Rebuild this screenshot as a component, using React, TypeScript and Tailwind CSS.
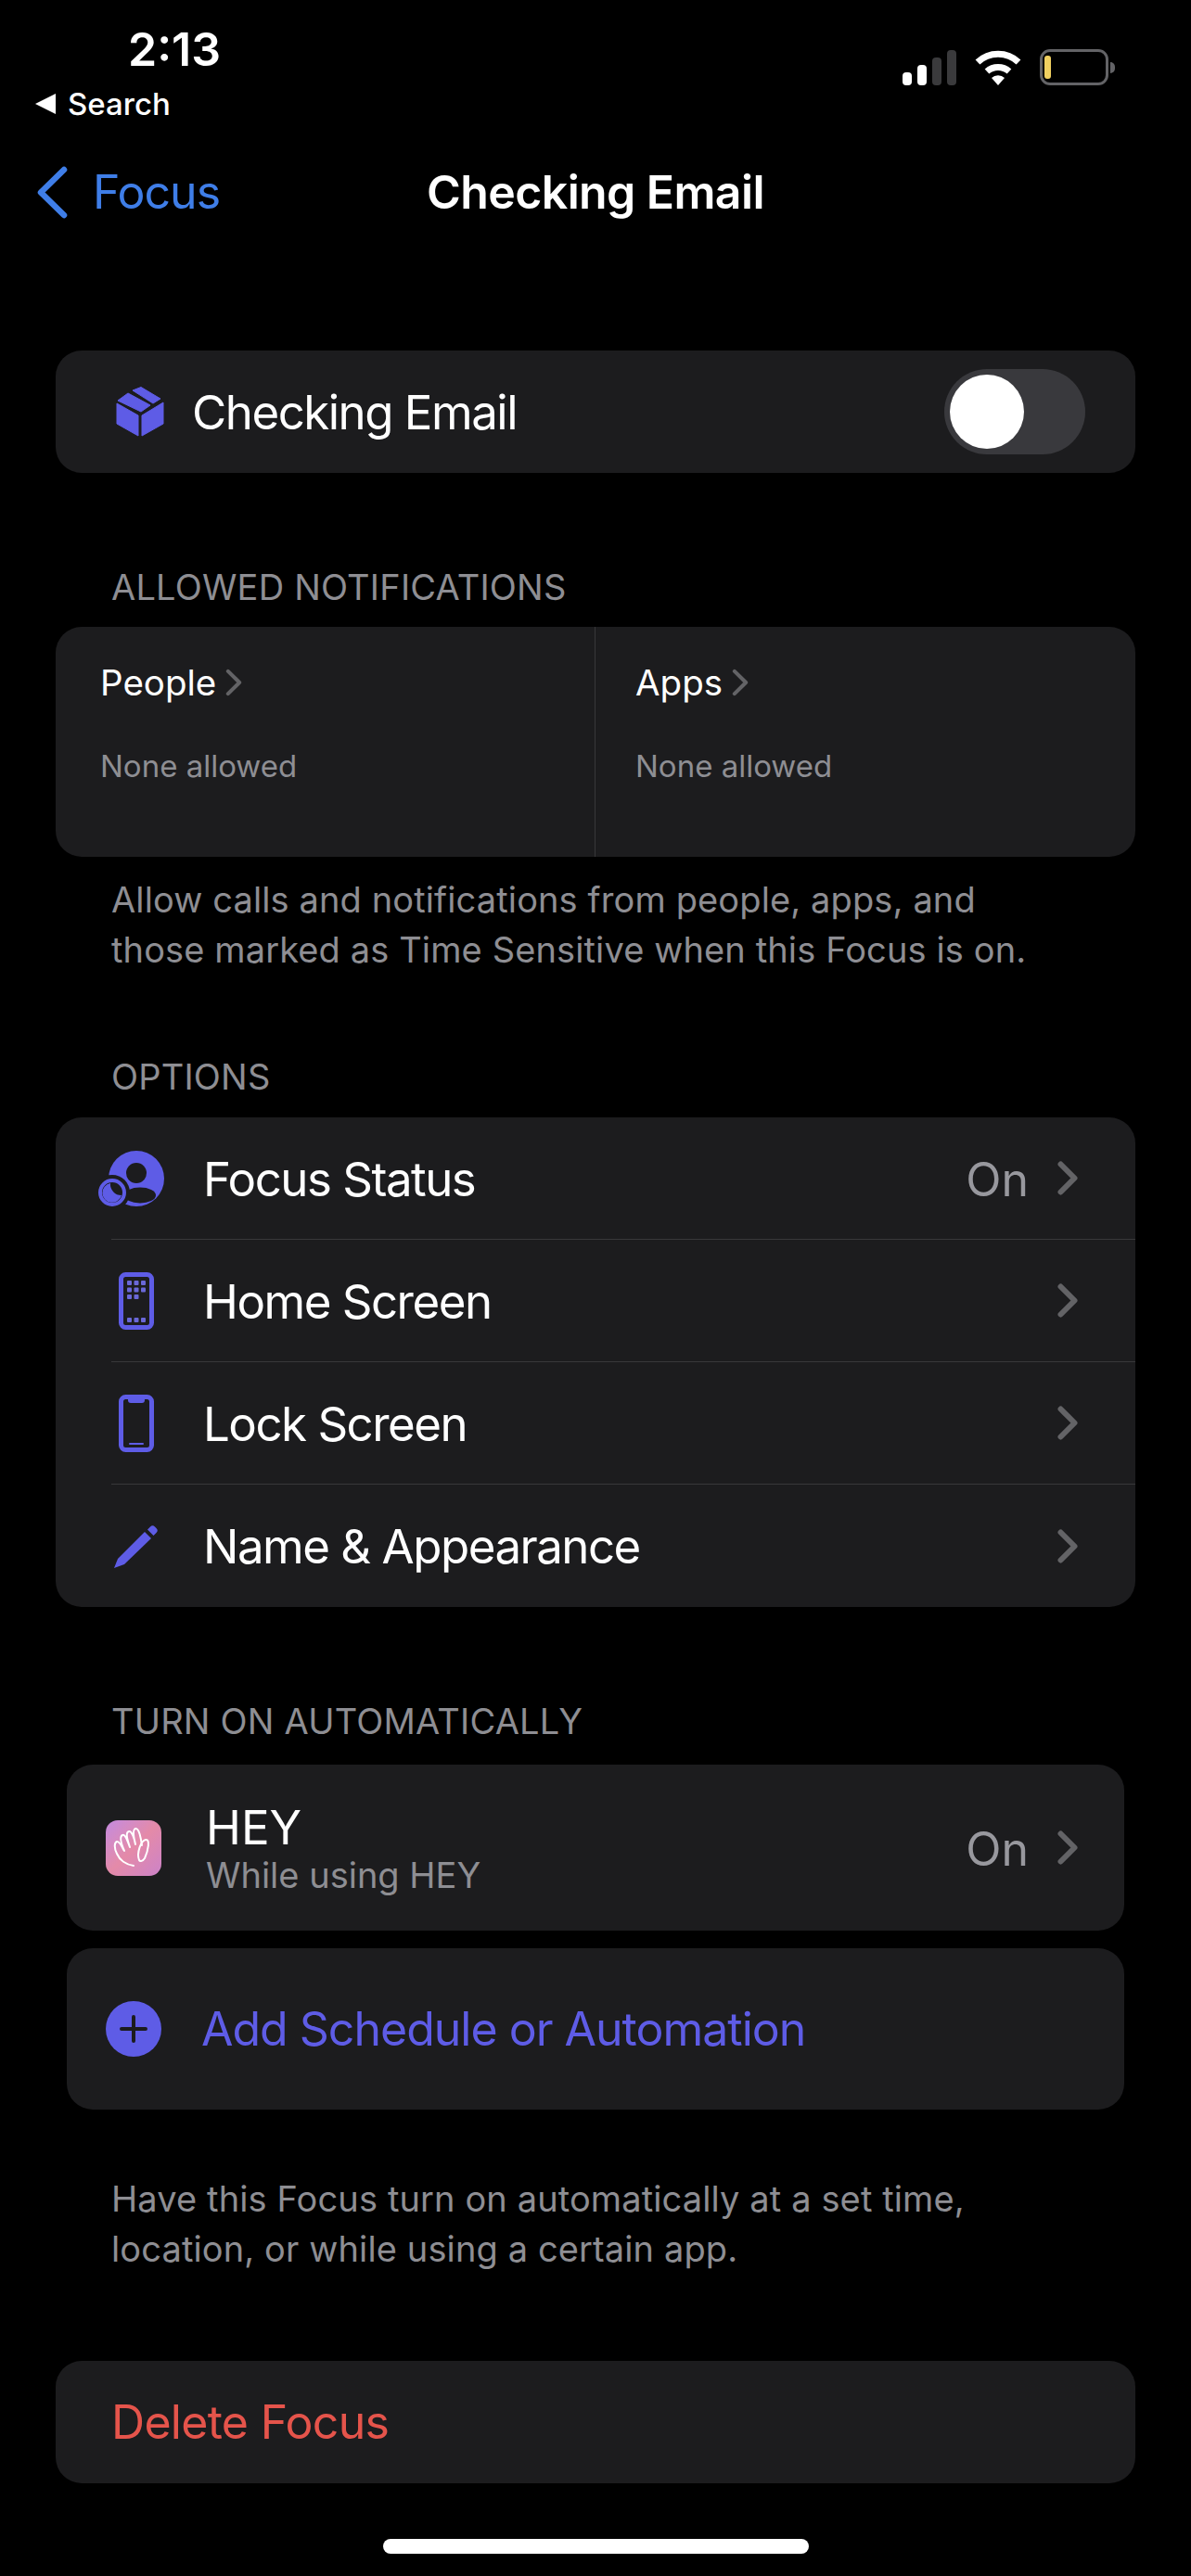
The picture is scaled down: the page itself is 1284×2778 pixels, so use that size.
function Chevron({ className, thin }: { className: string; thin?: boolean }) {
  return (
    <svg className={className} viewBox="0 0 22 37" fill="none" preserveAspectRatio="none">
      <path d="M3.5 3.5L18.5 18.5L3.5 33.5" stroke="#636366" strokeWidth={thin ? 5 : 6} strokeLinecap="round" strokeLinejoin="round" />
    </svg>
  );
}

function OptionRow({ label, value, icon, last }: { label: string; value?: string; icon: React.ReactNode; last?: boolean }) {
  return (
    <div className="flex h-[132px] pl-[60px]">
      <div className={`flex flex-1 items-center ${last ? "" : "border-b border-[#38383a]"}`}>
        <div className="flex w-[54px] shrink-0 items-center justify-center">{icon}</div>
        <span className="ml-[45px] pt-[3px] text-[51px] tracking-[-1.5px] text-white">{label}</span>
        <span className="ml-auto pt-[3px] text-[50px] text-[#98989e]">{value}</span>
        <Chevron className="ml-[31px] mr-[62px] h-[37px] w-[22px]" />
      </div>
    </div>
  );
}

function FocusStatusIcon() {
  return (
    <svg className="-ml-[11px] shrink-0" width="71" height="60" viewBox="0 0 71 60">
      <circle cx="41" cy="30" r="30" fill="#5e5ce6" />
      <circle cx="41" cy="24" r="11" fill="#1c1c1e" />
      <ellipse cx="45" cy="48" rx="17" ry="8.5" fill="#1c1c1e" />
      <circle cx="15" cy="45" r="19" fill="#1c1c1e" />
      <circle cx="15" cy="45" r="13" fill="none" stroke="#5e5ce6" strokeWidth="4" />
      <path d="M13 35a10.5 10.5 0 1 0 12 13a12 12 0 0 1-12-13z" fill="#5e5ce6" />
    </svg>
  );
}

function HomeScreenIcon() {
  const dots = [
    [9, 9], [16.5, 9], [24, 9],
    [9, 16.5], [16.5, 16.5], [24, 16.5],
    [9, 24], [16.5, 24],
    [9, 49], [16.5, 49], [24, 49],
  ];
  return (
    <svg className="shrink-0" width="38" height="62" viewBox="0 0 38 62">
      <rect x="2.500" y="2.500" width="33" height="57" rx="5" fill="none" stroke="#5e5ce6" strokeWidth="5" />
      {dots.map(([x, y]) => (
        <rect key={`${x}-${y}`} x={x} y={y} width="5" height="5" rx="1" fill="#6a68d8" />
      ))}
    </svg>
  );
}

function LockScreenIcon() {
  return (
    <svg className="shrink-0" width="38" height="62" viewBox="0 0 38 62">
      <rect x="2.500" y="2.500" width="33" height="57" rx="5" fill="none" stroke="#5e5ce6" strokeWidth="5" />
      <path d="M10 3h18v3a3 3 0 0 1-3 3H13a3 3 0 0 1-3-3z" fill="#5e5ce6" />
      <rect x="11" y="52" width="16" height="2" rx="1" fill="#5e5ce6" />
    </svg>
  );
}

function PencilIcon() {
  return (
    <svg className="shrink-0" width="49" height="48" viewBox="0 0 49 48">
      <path d="M0 48l4-10L33 9l7 7L11 44z" fill="#5e5ce6" />
      <path d="M36 6.5l3-3a3.5 3.5 0 0 1 5 0l1.500 1.500a3.500 3.500 0 0 1 0 5l-3 3z" fill="#5e5ce6" />
    </svg>
  );
}

function CubeIcon() {
  return (
    <svg className="shrink-0" width="52" height="54" viewBox="0 0 52 54" fill="#5e5ce6" stroke="#5e5ce6" strokeWidth="1" strokeLinejoin="round">
      <path d="M2 15L13 7L37 20L27 27z" />
      <path d="M18 4L27 0.500L48 13L40 18z" />
      <path d="M1 18L24 31V53L1 40z" />
      <path d="M28 31L51 17V40L28 53z" />
    </svg>
  );
}

function HeyIcon() {
  return (
    <div className="flex h-[60px] w-[60px] shrink-0 items-center justify-center rounded-[13px] bg-gradient-to-br from-[#c48ae0] via-[#e48aa8] to-[#cc82c8]">
      <svg width="60" height="60" viewBox="0 0 60 60" fill="none" stroke="#ffffff" strokeWidth="2" strokeLinecap="round" strokeLinejoin="round">
        <path d="M30 49C22 48 15 43 12 36C9 30 9 24 12 23C15 22 18 30 20 33C17 26 14 18 18 16C21 14 24 24 26 29C23 20 21 13 25 12C28 11 31 20 32 26C30 18 29 10 32 9C36 8 38 20 39 27" />
        <path d="M36 43C33 35 38 22 43 21C48 20 46 32 42 41C40 44 37 45 36 43z" />
      </svg>
    </div>
  );
}

export default function App() {
  return (
    <div className="h-[2778px] w-[1284px] overflow-hidden bg-black font-['Inter',sans-serif] text-white">
      {/* status bar */}
      <div className="flex h-[140px] justify-between">
        <div className="pl-[38px]">
          <div className="mt-[24px] pl-[100px] text-[50px] leading-[58px] font-semibold">2:13</div>
          <div className="mt-[10px] flex items-center">
            <svg width="22" height="22" viewBox="0 0 22 22"><path d="M0 11L22 0v22z" fill="#fff" /></svg>
            <span className="ml-[13px] text-[33px] leading-[40px] font-medium">Search</span>
          </div>
        </div>
        <div className="mt-[53px] mr-[82px] flex h-[40px] items-start">
          <svg className="mt-[1px]" width="58" height="38" viewBox="0 0 58 38">
            <rect x="0" y="24" width="10" height="14" rx="4" fill="#fff" />
            <rect x="16" y="16" width="10" height="22" rx="4" fill="#fff" />
            <rect x="32" y="8" width="10" height="30" rx="4" fill="#3a3a3c" />
            <rect x="48" y="0" width="10" height="38" rx="4" fill="#3a3a3c" />
          </svg>
          <svg className="mt-[1px] ml-[20px]" width="50" height="38" viewBox="0 0 50 38">
            <path d="M3 13a32 32 0 0 1 44 0" fill="none" stroke="#fff" strokeWidth="7" />
            <path d="M13 23a18 18 0 0 1 24 0" fill="none" stroke="#fff" strokeWidth="7" />
            <path d="M18 30a10 10 0 0 1 14 0l-7 8z" fill="#fff" />
          </svg>
          <div className="ml-[20px] flex items-center">
            <div className="flex h-[39px] w-[74px] items-center rounded-[11px] border-[3px] border-[#636366] pl-[2px]">
              <div className="h-[25px] w-[7px] rounded-[3px] bg-[#f0d060]" />
            </div>
            <div className="ml-[2px] h-[12px] w-[5px] rounded-r-full bg-[#636366]" />
          </div>
        </div>
      </div>

      {/* nav */}
      <div className="grid h-[134px] grid-cols-[1fr_auto_1fr] items-center">
        <div className="flex items-center pl-[40px] text-[#3f7ee8]">
          <svg width="33" height="57" viewBox="0 0 33 57" fill="none">
            <path d="M29 4L4 28.500L29 53" stroke="#3f7ee8" strokeWidth="6.500" strokeLinecap="round" strokeLinejoin="round" />
          </svg>
          <span className="ml-[27px] text-[50px] leading-[60px] tracking-[-1px]">Focus</span>
        </div>
        <span className="text-[50px] font-semibold tracking-[-0.6px]">Checking Email</span>
      </div>

      <div className="mx-[60px] mt-[104px] flex h-[132px] items-center rounded-[28px] bg-[#1c1c1e] pl-[65px] pr-[54px]">
        <CubeIcon />
        <span className="ml-[30px] pt-[3px] text-[51px] tracking-[-1.5px]">Checking Email</span>
        <div className="ml-auto flex h-[92px] w-[152px] items-center rounded-full bg-[#39393d] pl-[6px]">
          <div className="h-[80px] w-[80px] rounded-full bg-white" />
        </div>
      </div>

      {/* allowed notifications */}
      <div className="mt-[101px] pb-[1px] pl-[120px] text-[38px] leading-[44px] tracking-[0.2px] text-[#8e8e93]">ALLOWED NOTIFICATIONS</div>
      <div className="mx-[60px] mt-[20px] grid h-[248px] grid-cols-[582px_1fr] rounded-[28px] bg-[#1c1c1e]">
        <div className="border-r border-[#38383a] pl-[48px] pt-[36px]">
          <div className="flex items-center text-[38.500px] leading-[48px]">
            People
            <Chevron thin className="ml-[10px] h-[30px] w-[18px]" />
          </div>
          <div className="mt-[45px] text-[33px] leading-[42px] text-[#8e8e93]">None allowed</div>
        </div>
        <div className="pl-[43px] pt-[36px]">
          <div className="flex items-center text-[38.500px] leading-[48px]">
            Apps
            <Chevron thin className="ml-[10px] h-[30px] w-[18px]" />
          </div>
          <div className="mt-[45px] text-[33px] leading-[42px] text-[#8e8e93]">None allowed</div>
        </div>
      </div>
      <div className="mt-[19px] pl-[120px] text-[38px] leading-[54px] tracking-[0.12px] text-[#8e8e93]">
        Allow calls and notifications from people, apps, and
        <br />
        those marked as Time Sensitive when this Focus is on.
      </div>

      {/* options */}
      <div className="mt-[88px] pl-[120px] text-[38px] leading-[44px] tracking-[0.2px] text-[#8e8e93]">OPTIONS</div>
      <div className="mx-[60px] mt-[22px] rounded-[28px] bg-[#1c1c1e]">
        <OptionRow label="Focus Status" value="On" icon={<FocusStatusIcon />} />
        <OptionRow label="Home Screen" icon={<HomeScreenIcon />} />
        <OptionRow label="Lock Screen" icon={<LockScreenIcon />} />
        <OptionRow label="Name & Appearance" icon={<PencilIcon />} last />
      </div>

      {/* turn on automatically */}
      <div className="mt-[101px] pl-[120px] text-[38px] leading-[44px] tracking-[0.2px] text-[#8e8e93]">TURN ON AUTOMATICALLY</div>
      <div className="mx-[72px] mt-[25px] flex h-[179px] items-center rounded-[28px] bg-[#1c1c1e] pl-[42px]">
        <HeyIcon />
        <div className="ml-[48px] pt-[3px]">
          <div className="text-[51px] leading-[56px]">HEY</div>
          <div className="text-[38px] leading-[46px] text-[#8e8e93]">While using HEY</div>
        </div>
        <span className="ml-auto pt-[3px] text-[50px] text-[#98989e]">On</span>
        <Chevron className="ml-[31px] mr-[50px] h-[37px] w-[22px]" />
      </div>
      <div className="mx-[72px] mt-[19px] flex h-[174px] items-center rounded-[28px] bg-[#1c1c1e] pl-[42px]">
        <div className="flex h-[60px] w-[60px] shrink-0 items-center justify-center rounded-full bg-[#5e5ce6]">
          <svg width="30" height="30" viewBox="0 0 30 30">
            <path d="M15 2v26M2 15h26" stroke="#1c1c1e" strokeWidth="4" strokeLinecap="round" />
          </svg>
        </div>
        <span className="ml-[43px] text-[50px] tracking-[-1px] text-[#5e5ce6]">Add Schedule or Automation</span>
      </div>
      <div className="mt-[69px] pl-[120px] text-[38px] leading-[54px] tracking-[0.12px] text-[#8e8e93]">
        Have this Focus turn on automatically at a set time,
        <br />
        location, or while using a certain app.
      </div>

      <div className="mx-[60px] mt-[94px] flex h-[132px] items-center rounded-[28px] bg-[#1c1c1e] pl-[60px] text-[50px] tracking-[-0.7px] text-[#e5544b]">
        Delete Focus
      </div>

      <div className="mx-auto mt-[60px] h-[16px] w-[459px] rounded-full bg-white" />
    </div>
  );
}
